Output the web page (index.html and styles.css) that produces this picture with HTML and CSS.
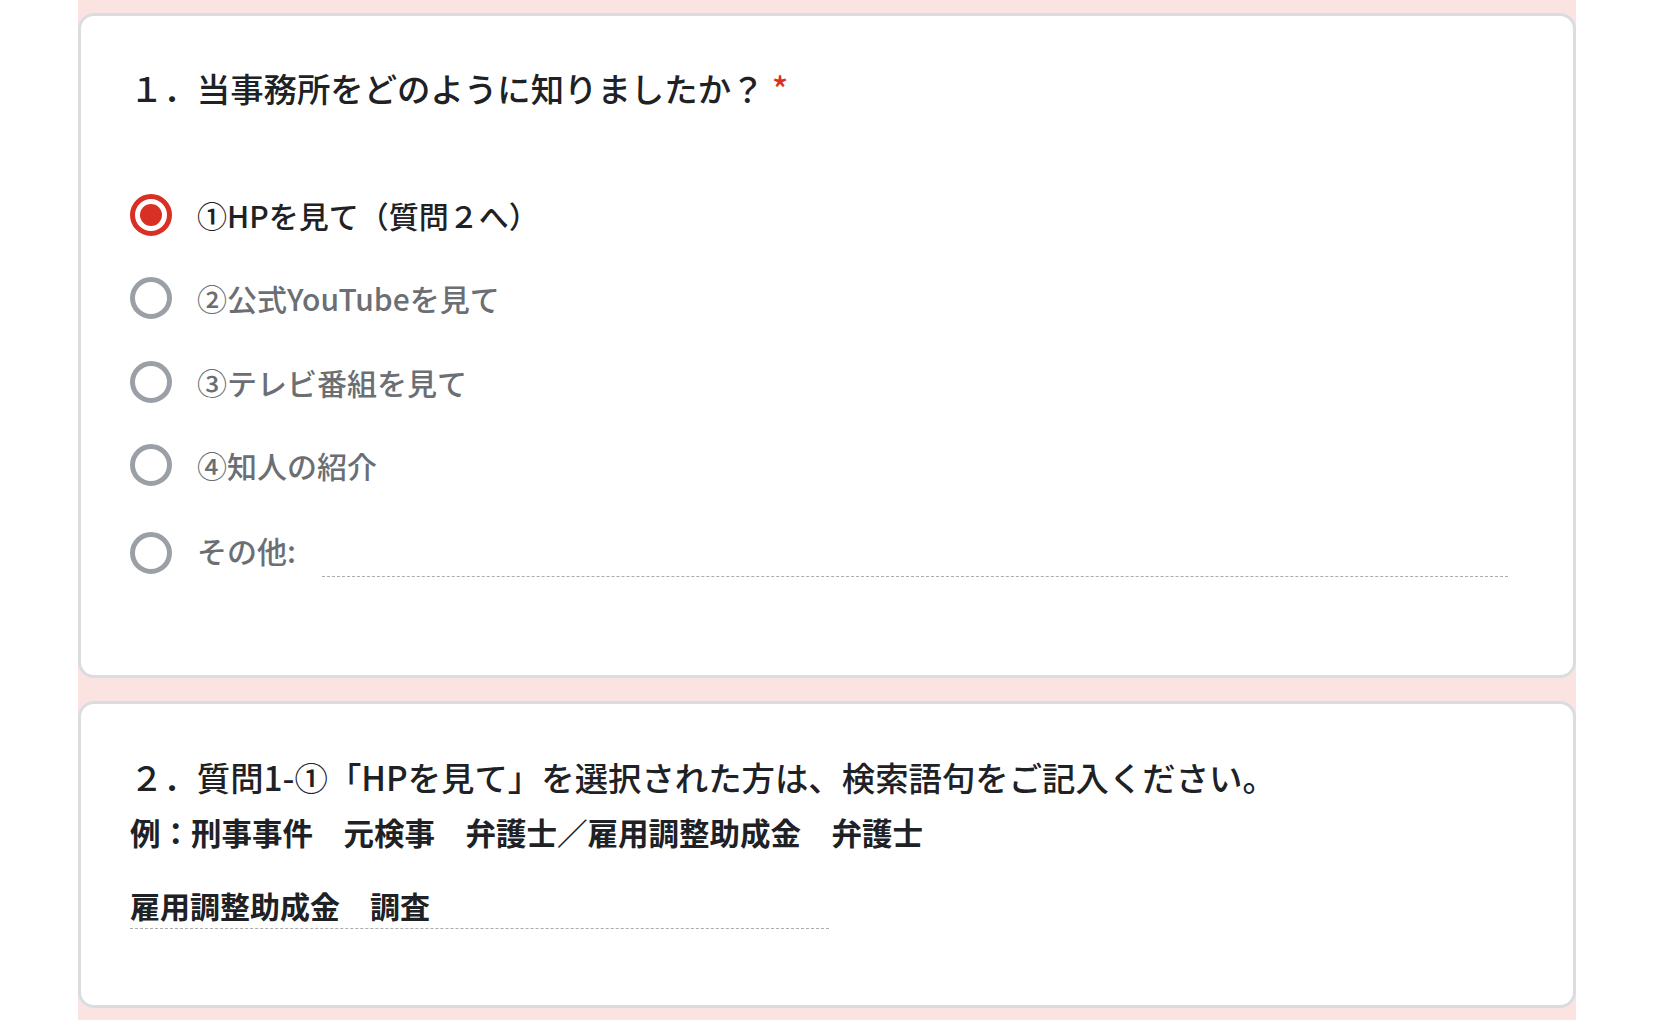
FILE: index.html
```html
<!DOCTYPE html>
<html lang="ja">
<head>
<meta charset="utf-8">
<title>アンケート</title>
<link rel="stylesheet" href="styles.css">
</head>
<body>
<main class="page">
  <section class="card card-q1">
    <h2 class="q-title">１．当事務所をどのように知りましたか？ <span class="req">*</span></h2>
    <div class="options">
      <label class="opt selected"><span class="radio"></span><span class="opt-text">①HPを見て（質問２へ）</span></label>
      <label class="opt"><span class="radio"></span><span class="opt-text">②公式YouTubeを見て</span></label>
      <label class="opt"><span class="radio"></span><span class="opt-text">③テレビ番組を見て</span></label>
      <label class="opt"><span class="radio"></span><span class="opt-text">④知人の紹介</span></label>
      <div class="opt opt-other"><span class="radio"></span><span class="opt-text">その他:</span><span class="other-input"></span></div>
    </div>
  </section>
  <section class="card card-q2">
    <h2 class="q-title q-title-2">２．質問1-①「HPを見て」を選択された方は、検索語句をご記入ください。</h2>
    <p class="q-desc">例：刑事事件　元検事　弁護士／雇用調整助成金　弁護士</p>
    <div class="answer">雇用調整助成金　調査</div>
  </section>
</main>
</body>
</html>
```
FILE: styles.css
```css
html, body {
  margin: 0;
  padding: 0;
  background: #ffffff;
}
body {
  font-family: "Noto Sans CJK JP", "Noto Sans", sans-serif;
  color: #202124;
}
.page {
  margin-left: 78px;
  width: 1498px;
  background: #fbe3e2;
  padding: 13px 0 12px;
  display: flex;
  flex-direction: column;
  gap: 23px;
  box-sizing: border-box;
}
.card {
  background: #ffffff;
  border: 3px solid #dadce0;
  border-radius: 16px;
  box-sizing: border-box;
}
.card-q1 {
  height: 665px;
  padding: 52px 65px 0 49px;
}
.card-q2 {
  height: 307px;
  padding: 53px 65px 0 49px;
}
.q-title {
  margin: 0;
  font-size: 33.4px;
  line-height: 40px;
  font-weight: 500;
  color: #202124;
  white-space: nowrap;
}
.q-title-2 {
  font-weight: 500;
}
.req {
  color: #d93025;
}
.options {
  margin-top: 65px;
  display: flex;
  flex-direction: column;
}
.opt {
  display: flex;
  align-items: center;
  height: 83.5px;
  font-size: 30px;
  font-weight: 500;
  color: #6b6f74;
}
.opt.selected {
  color: #202124;
}
.radio {
  width: 42px;
  height: 42px;
  box-sizing: border-box;
  border: 5px solid #9aa0a6;
  border-radius: 50%;
  margin-right: 25px;
  flex: none;
  position: relative;
}
.selected .radio {
  border-color: #d93025;
}
.selected .radio::after {
  content: "";
  position: absolute;
  left: 5px;
  top: 5px;
  width: 22px;
  height: 22px;
  border-radius: 50%;
  background: #d93025;
}
.opt-text {
  line-height: 40px;
}
.opt-other {
  height: 92px;
}
.opt-other .opt-text {
  margin-top: -7px;
}
.other-input {
  flex: 1;
  align-self: flex-start;
  height: 69px;
  margin-left: 26px;
  border-bottom: 1px dashed #a9acb0;
}
.q-desc {
  margin: 15px 0 0;
  font-size: 30.5px;
  line-height: 40px;
  font-weight: 700;
  color: #202124;
  white-space: nowrap;
}
.answer {
  margin-top: 33px;
  width: 699px;
  font-size: 30px;
  line-height: 40px;
  font-weight: 700;
  color: #202124;
  padding-bottom: 3px;
  border-bottom: 1px dashed #a9acb0;
}
```
